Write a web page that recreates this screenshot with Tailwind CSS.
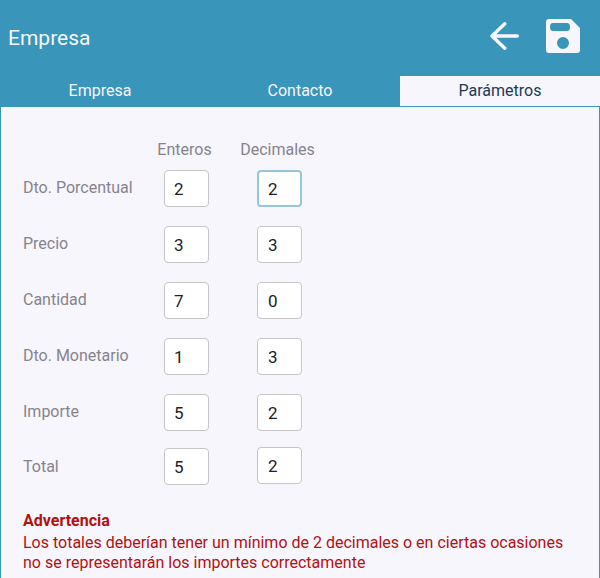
<!DOCTYPE html>
<html lang="es">
<head>
  <meta charset="UTF-8" />
  <meta name="viewport" content="width=device-width, initial-scale=1.0" />
  <title>Empresa</title>
  <script src="https://cdn.jsdelivr.net/npm/@tailwindcss/browser@4"></script>
</head>
<body class="w-[600px] h-[578px] overflow-hidden bg-[#f8f6fd] font-['Roboto',sans-serif]">
  <!-- header -->
  <header class="h-[76px] bg-[#3995b9] flex items-center justify-between pb-[4px] pl-2 pr-[20px]">
    <h1 class="text-[21px] leading-[30px] mt-[4px] text-[#f8f6fd]">Empresa</h1>
    <div class="flex items-center gap-[27px]">
      <svg class="w-[29px] h-[28px]" viewBox="0 0 29 28" fill="none" stroke="#f8f6fd" stroke-width="3.400" stroke-linecap="round" stroke-linejoin="round">
        <path d="M2 14H27.300M14.800 1.800 2 14 14.800 26.200" />
      </svg>
      <svg class="w-[34px] h-[34px]" viewBox="0 0 34 34">
        <path fill="#f8f6fd" fill-rule="evenodd" d="M3 0H25L34 9V31C34 33 33 34 31 34H3C1 34 0 33 0 31V3C0 1 1 0 3 0ZM7 4C5 4 4 5.500 4 8S5 12 7 12H21C23 12 24 10.500 24 8S23 4 21 4ZM17 18A6 6 0 1 0 17 30 6 6 0 1 0 17 18Z" />
      </svg>
    </div>
  </header>

  <!-- tabs -->
  <nav class="h-[30px] bg-[#3995b9] grid grid-cols-3 text-[16px] leading-[30px] text-center">
    <div class="text-[#f8f6fd]">Empresa</div>
    <div class="text-[#f8f6fd]">Contacto</div>
    <div class="bg-[#f8f6fd] text-[#1d3b53]">Parámetros</div>
  </nav>

  <main class="h-[472px] border-x border-t border-[#3995b9] pl-[22px] pt-[33px]">
    <div class="flex text-[16px] leading-[20px] text-[#85848b]">
      <span class="w-[119px]"></span>
      <span class="w-[85px] text-center">Enteros</span>
      <span class="w-[101px] text-center">Decimales</span>
    </div>

    <div class="mt-[10px] flex flex-col gap-[19px]">
      <div class="flex items-center h-[37px]">
        <span class="w-[141px] -mt-[1px] text-[16px] text-[#85848b]">Dto. Porcentual</span>
        <input class="w-[45px] h-[37px] rounded-[4px] border border-[#c6c5ca] bg-white pl-[9px] text-[17px] text-[#222]" value="2" />
        <input class="ml-[48px] w-[45px] h-[37px] rounded-[4px] border-2 border-[#96c6dc] bg-white pl-[9px] text-[17px] text-[#222]" value="2" />
      </div>
      <div class="flex items-center h-[37px]">
        <span class="w-[141px] -mt-[1px] text-[16px] text-[#85848b]">Precio</span>
        <input class="w-[45px] h-[37px] rounded-[4px] border border-[#c6c5ca] bg-white pl-[9px] text-[17px] text-[#222]" value="3" />
        <input class="ml-[48px] w-[45px] h-[37px] rounded-[4px] border border-[#c6c5ca] bg-white pl-[10px] text-[17px] text-[#222]" value="3" />
      </div>
      <div class="flex items-center h-[37px]">
        <span class="w-[141px] -mt-[1px] text-[16px] text-[#85848b]">Cantidad</span>
        <input class="w-[45px] h-[37px] rounded-[4px] border border-[#c6c5ca] bg-white pl-[9px] text-[17px] text-[#222]" value="7" />
        <input class="ml-[48px] w-[45px] h-[37px] rounded-[4px] border border-[#c6c5ca] bg-white pl-[10px] text-[17px] text-[#222]" value="0" />
      </div>
      <div class="flex items-center h-[37px]">
        <span class="w-[141px] -mt-[1px] text-[16px] text-[#85848b]">Dto. Monetario</span>
        <input class="w-[45px] h-[37px] rounded-[4px] border border-[#c6c5ca] bg-white pl-[9px] text-[17px] text-[#222]" value="1" />
        <input class="ml-[48px] w-[45px] h-[37px] rounded-[4px] border border-[#c6c5ca] bg-white pl-[10px] text-[17px] text-[#222]" value="3" />
      </div>
      <div class="flex items-center h-[37px]">
        <span class="w-[141px] -mt-[1px] text-[16px] text-[#85848b]">Importe</span>
        <input class="w-[45px] h-[37px] rounded-[4px] border border-[#c6c5ca] bg-white pl-[9px] text-[17px] text-[#222]" value="5" />
        <input class="ml-[48px] w-[45px] h-[37px] rounded-[4px] border border-[#c6c5ca] bg-white pl-[10px] text-[17px] text-[#222]" value="2" />
      </div>
      <div class="flex items-start h-[37px] -mt-[3px]">
        <span class="w-[141px] mt-[8px] text-[16px] text-[#85848b]">Total</span>
        <input class="mt-px w-[45px] h-[37px] rounded-[4px] border border-[#c6c5ca] bg-white pl-[9px] text-[17px] text-[#222]" value="5" />
        <input class="ml-[48px] w-[45px] h-[37px] rounded-[4px] border border-[#c6c5ca] bg-white pl-[10px] text-[17px] text-[#222]" value="2" />
      </div>
    </div>

    <div class="mt-[27px] text-[#b60f0f] text-[16px] leading-[20px]">
      <p class="font-bold">Advertencia</p>
      <p class="mt-[2px]">Los totales deberían tener un mínimo de 2 decimales o en ciertas ocasiones<br />no se representarán los importes correctamente</p>
    </div>
  </main>
</body>
</html>
